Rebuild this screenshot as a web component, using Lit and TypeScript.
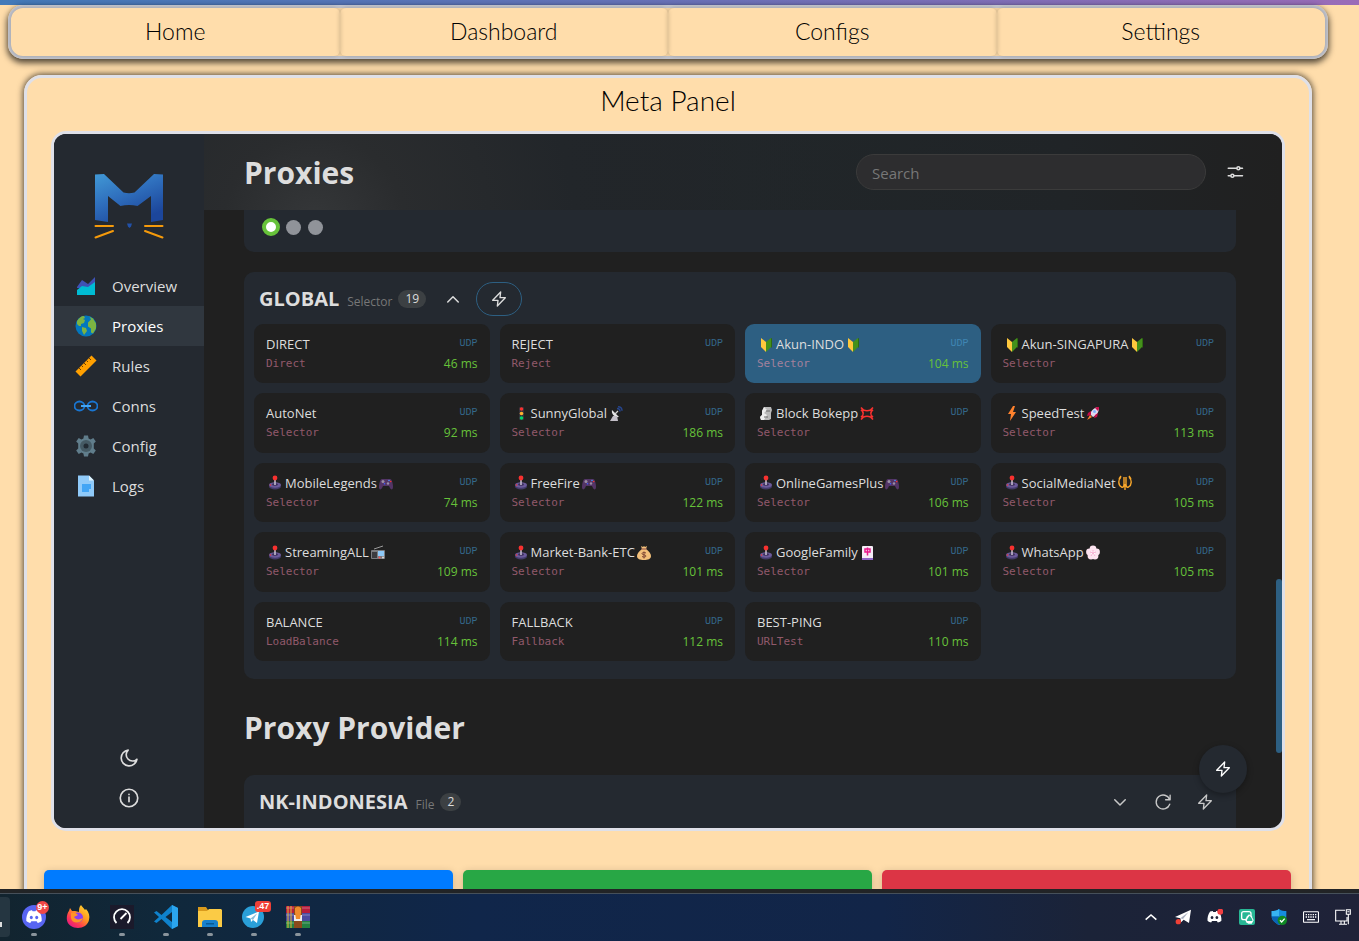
import { LitElement, html, svg, css, nothing, TemplateResult } from "lit";
import { customElement } from "lit/decorators.js";
import { classMap } from "lit/directives/class-map.js";

const glyphs: Record<string, TemplateResult> = {
  beginner: svg`<path d="M2 1l5 4v10l-5-5z" fill="#ffc83d"/><path d="M12 1L7 5v10l5-5z" fill="#44911b"/><path d="M12 1l1 .5V10l-1 1z" fill="#2f6b12"/>`,
  traffic: svg`<rect x="5" y="1" width="5" height="13" rx="1" fill="#33303a"/><circle cx="7.5" cy="3" r="1.8" fill="#f8312f"/><circle cx="7.5" cy="7.5" r="1.8" fill="#ffb02e"/><circle cx="7.5" cy="12" r="1.8" fill="#00d26a"/>`,
  satellite: svg`<path d="M3 4c-1 4 3 8 7 7z" fill="#e6e6e6"/><path d="M4 10l-3 5h8l-1-5z" fill="#c4c0c8"/><path d="M6 8l3-3" stroke="#d3d3d3" stroke-width="1.2"/><path d="M8 2.500c2 0 3 1 3 3M9 .8c3 0 4 2 4 4" stroke="#26458c" stroke-width="1.500" fill="none"/>`,
  moai: svg`<path d="M5 1h7l1 3-1 3v6l-2 1H2l-1-3 2-2V5z" fill="#b9b9b9"/><path d="M5 1L3 5v4l-2 2 1 3h3l3-5-3-2 3-3z" fill="#ececec"/><path d="M7 5h4M5 11h4" stroke="#6d6d6d" stroke-width="1.2"/>`,
  anger: svg`<path d="M1 1.500l2.500 2.500q3.500 1.500 7 0L13 1.500M1 13.500l2.500-2.500q3.500-1.500 7 0l2.500 2.500M1 4l1.500 1q1.500 2.500 0 5L1 11M13 4l-1.500 1q-1.500 2.500 0 5l1.500 1" stroke="#f8312f" stroke-width="1.7" fill="none"/>`,
  bolt: svg`<path d="M8 0L3 8h3l-1 7 6-9H8l2-6z" fill="#ff822d"/>`,
  rocket: svg`<path d="M13 1c-5 0-8 4-9 7l3 3c4-2 6-5 6-10z" fill="#e1d8ec"/><path d="M13 1c-2 0-3 .3-4 1l3 3c.8-1 1-2 1-4zM5 5L2 7l-1 3 4-1zM9 9l-1 3 3-1 1-4z" fill="#ca0b4a"/><circle cx="8.5" cy="5.5" r="1.5" fill="#7fb4ff"/><path d="M4 9l-3 5 5-3z" fill="#ff822d"/>`,
  joystick: svg`<ellipse cx="7" cy="11.5" rx="6" ry="3" fill="#433b6b"/><ellipse cx="7" cy="10" rx="6" ry="2.7" fill="#6b5a9b"/><ellipse cx="7" cy="9.5" rx="3" ry="1.3" fill="#3b2f5a"/><path d="M7 4v6" stroke="#cdc4d6" stroke-width="1.5"/><circle cx="7" cy="3" r="2.4" fill="#f8312f"/><circle cx="2.5" cy="10" r=".8" fill="#f8312f"/>`,
  gamepad: svg`<path d="M3 4h8c2 0 3 5 3 8 0 3-2 3-3 1l-1-2H4l-1 2c-1 2-3 2-3-1 0-3 1-8 3-8z" fill="#533566"/><circle cx="4" cy="6.500" r="1.500" fill="#998ea4"/><circle cx="9" cy="8.500" r="1.200" fill="#998ea4"/><circle cx="10" cy="5.500" r=".8" fill="#5092ff"/><circle cx="11.700" cy="6.500" r=".8" fill="#f8312f"/><circle cx="5.500" cy="8.700" r=".8" fill="#3f5fff"/>`,
  trident: svg`<path d="M3 2C0 5 0 10 3.500 12c2 .8 2.500-1 2.500-3V2M11 2c3 3 3 8-.5 10-2 .8-2.500-1-2.500-3V2M7 9v6M1 4l2-3M13 4l-2-3" stroke="#f9a72b" stroke-width="1.400" fill="none"/>`,
  radio: svg`<rect y="5" width="14" height="9" rx="1" fill="#7c7c80"/><rect x="1" y="7" width="5" height="6" fill="#3c3b3f"/><rect x="7" y="6" width="6" height="5" fill="#8ec9f8"/><path d="M3 4l9-3" stroke="#9b9b9b"/><circle cx="8.500" cy="12.500" r="1" fill="#f55"/><circle cx="12" cy="12.500" r="1" fill="#ddd"/>`,
  money: svg`<path d="M4 1l2 1 1-1 1 1 2-1-1 3c3 2 5 5 5 7 0 3-3 4-7 4s-7-1-7-4c0-2 2-5 5-7z" fill="#f3c07a"/><path d="M4.500 4h5" stroke="#a56953" stroke-width="1.4"/><path d="M9 8c-2-1-4-.5-4 .7 0 1.500 4 .8 4 2.300 0 1.200-2.500 1.400-4 .5M7 6.500v7" stroke="#7d4533" fill="none"/>`,
  mahjong: svg`<rect x="2" y="1" width="11" height="14" rx="1" fill="#f5edf7"/><rect x="2" y="13" width="11" height="2" fill="#8d65c5"/><path d="M5 4h5v3H5zM7.500 2.500v8" stroke="#e8198b" stroke-width="1.500" fill="none"/>`,
  flower: svg`<g fill="#fde3f0"><circle cx="7" cy="4" r="3.400"/><circle cx="3.500" cy="7" r="3.400"/><circle cx="10.500" cy="7" r="3.400"/><circle cx="5" cy="11" r="3.400"/><circle cx="9" cy="11" r="3.400"/></g><circle cx="7" cy="8" r="2" fill="#fff"/><path d="M7 8V5M7 8l3-1M7 8L4 7M7 8l-2 3M7 8l2 3" stroke="#f59ac6" stroke-width=".7"/>`,
};

const line = (size: number, body: TemplateResult, width = 2) =>
  html`<svg width=${size} height=${size} viewBox="0 0 24 24" fill="none" stroke="currentColor" stroke-width=${width} stroke-linecap="round" stroke-linejoin="round" aria-hidden="true">${body}</svg>`;

const zap = () => line(16, svg`<path d="M14.500 1.500L2.500 14h8l-1 8.500L21.500 10h-8z"/>`, 2);
const chevronUp = () => line(18, svg`<path d="M5 16l7-7 7 7"/>`, 2);
const chevronDown = () => line(18, svg`<path d="M5 9l7 7 7-7"/>`, 2);

interface Proxy {
  name: string;
  type: string;
  delay?: number;
  before?: string;
  after?: string;
  active?: boolean;
}

const proxies: Proxy[] = [
  { name: "DIRECT", type: "Direct", delay: 46 },
  { name: "REJECT", type: "Reject" },
  { name: "Akun-INDO", type: "Selector", delay: 104, before: "beginner", after: "beginner", active: true },
  { name: "Akun-SINGAPURA", type: "Selector", before: "beginner", after: "beginner" },
  { name: "AutoNet", type: "Selector", delay: 92 },
  { name: "SunnyGlobal", type: "Selector", delay: 186, before: "traffic", after: "satellite" },
  { name: "Block Bokepp", type: "Selector", before: "moai", after: "anger" },
  { name: "SpeedTest", type: "Selector", delay: 113, before: "bolt", after: "rocket" },
  { name: "MobileLegends", type: "Selector", delay: 74, before: "joystick", after: "gamepad" },
  { name: "FreeFire", type: "Selector", delay: 122, before: "joystick", after: "gamepad" },
  { name: "OnlineGamesPlus", type: "Selector", delay: 106, before: "joystick", after: "gamepad" },
  { name: "SocialMediaNet", type: "Selector", delay: 105, before: "joystick", after: "trident" },
  { name: "StreamingALL", type: "Selector", delay: 109, before: "joystick", after: "radio" },
  { name: "Market-Bank-ETC", type: "Selector", delay: 101, before: "joystick", after: "money" },
  { name: "GoogleFamily", type: "Selector", delay: 101, before: "joystick", after: "mahjong" },
  { name: "WhatsApp", type: "Selector", delay: 105, before: "joystick", after: "flower" },
  { name: "BALANCE", type: "LoadBalance", delay: 114 },
  { name: "FALLBACK", type: "Fallback", delay: 112 },
  { name: "BEST-PING", type: "URLTest", delay: 110 },
];

const menu: { label: string; icon: TemplateResult }[] = [
  { label: "Overview", icon: svg`<path d="M3 13l5-7 6 4 7-7v11H3z" fill="#3f51b5"/><path d="M3 16l5-4 6 1 7-5v13H3z" fill="#00bcd4"/>` },
  { label: "Proxies", icon: svg`<circle cx="12" cy="12" r="10.500" fill="#0277bd"/><path d="M3 7c2-3 4-5 7-5l1 2-2 1 2 1-1 3-3 1 0 2-2 0-2-2zM8 13l4 1 1 3-3 4-2-4zM15 2.500l4 2 3 5 0 5-3 5-2-1 0-4-3-2 0-4 3-3-1-2z" fill="#7cb342"/>` },
  { label: "Rules", icon: svg`<path d="M17.500 1.500l5 5-16 16-5-5z" fill="#ffa000"/><path d="M15 4l2 2M12.500 6.500l1.500 1.500M10 9l2 2M7.500 11.500L9 13M5 14l2 2" stroke="#6d4000" stroke-width="1"/>` },
  { label: "Conns", icon: svg`<ellipse cx="5.500" cy="12" rx="5" ry="4.500" fill="none" stroke="#1976d2" stroke-width="1.800"/><ellipse cx="18.500" cy="12" rx="5" ry="4.500" fill="none" stroke="#1976d2" stroke-width="1.800"/><path d="M7 12h10" stroke="#42a5f5" stroke-width="2"/>` },
  { label: "Config", icon: svg`<path d="M10 1.500h4l.6 3 2 .9 2.700-1.400 2.500 3.400-2 2v5.200l2 2-2.500 3.400-2.700-1.400-2 .9-.6 3h-4l-.6-3-2-.9-2.700 1.400-2.500-3.400 2-2V9.400l-2-2L4.700 4l2.700 1.400 2-.9z" fill="#607d8b"/><circle cx="12" cy="12" r="6" fill="#455a64"/><circle cx="12" cy="12" r="2.500" fill="#222b33"/>` },
  { label: "Logs", icon: svg`<path d="M4 1.500h11l5 5v16H4z" fill="#90caf9"/><path d="M15 1.500l5 5h-5z" fill="#e1f5fe"/><path d="M8 10h9v5h-2v3H8z" fill="#42a5f5"/>` },
];

const art = (body: TemplateResult, size = 24) =>
  html`<svg width=${size} height=${size} viewBox="0 0 24 24" aria-hidden="true">${body}</svg>`;

const discord = (fill: string, eye: string) => svg`<path d="M7 6c1.500-.7 2-.7 3-.8l.6 1h2.800l.6-1c1 .1 1.500.1 3 .8 2 3 3 6.500 2.700 10-1.400 1.200-2.700 1.700-4 2l-1-1.700H9.300l-1 1.700c-1.300-.3-2.600-.8-4-2C4 12.500 5 9 7 6z" fill=${fill}/><ellipse cx="9.300" cy="12.500" rx="1.500" ry="1.700" fill=${eye}/><ellipse cx="14.700" cy="12.500" rx="1.500" ry="1.700" fill=${eye}/>`;

const apps: { label: string; icon: TemplateResult; idle?: boolean; badge?: string }[] = [
  { label: "Discord", badge: "9+", icon: svg`<circle cx="12" cy="12" r="12" fill="#5865f2"/>${discord("#fff", "#5865f2")}` },
  { label: "Firefox", idle: true, icon: svg`<defs><linearGradient id="ff" x1="1" y1="0" x2=".2" y2="1"><stop stop-color="#ffe636"/><stop offset=".45" stop-color="#ff9a1f"/><stop offset=".75" stop-color="#ff3b50"/><stop offset="1" stop-color="#e31587"/></linearGradient></defs><path d="M15 0c1 2 3 3 4 5l1-1c3 3 4 7 3 11-1 5-6 8-11 8S1 20 .8 14C.6 10 2 7 3 6l1-3 2 3 3 0 4 1c0-3 0-5 2-7z" fill="url(#ff)"/><circle cx="12" cy="12.500" r="5" fill="#8a3ff0"/><path d="M5 8c3-1 5 0 7 2l-4 2c2 3 5 3 9 1-2 6-11 6-12 0z" fill="#ff9426"/>` },
  { label: "Speedtest", icon: svg`<rect width="24" height="24" fill="#1b1a2b"/><path d="M6.500 18a8 8 0 1 1 11 0" fill="none" stroke="#fff" stroke-width="1.800"/><path d="M10.500 14l6-6" stroke="#fff" stroke-width="1.800"/>` },
  { label: "Visual Studio Code", icon: svg`<path d="M18 0l6 3v18l-6 3L7.500 14 2.500 18 0 16.500 5 12 0 7.500 2.500 6 7.500 10zM18 7l-6.500 5 6.500 5z" fill="#0f82cc" fill-rule="evenodd"/><path d="M18 0l6 3v18l-6 3z" fill="#2ba5ee"/>` },
  { label: "File Explorer", icon: svg`<path d="M0 2h8l2 3v5H0z" fill="#d99a1c"/><path d="M0 6h9l2-2h12l1 1v17H0z" fill="#fbcb45"/><path d="M4 22v-4q0-3 3-3h10q3 0 3 3v4z" fill="#1780cc"/><path d="M8 18h8v1.500H8z" fill="#075a96"/>` },
  { label: "Telegram", badge: ".47", icon: svg`<circle cx="11" cy="12" r="11" fill="#2a9fd8"/><path d="M3.500 12L17 6.500 15 18l-4-3-2 2-.4-3.500z" fill="#fff"/><path d="M8.600 13.500L15 8.500 11 15z" fill="#8abedb"/>` },
  { label: "WinRAR", icon: svg`<rect y="1" width="24" height="7" fill="#b51d3d"/><rect y="8" width="24" height="8" fill="#4b4aa0"/><rect y="16" width="24" height="7" fill="#238142"/><path d="M0 3h24M0 10h24M0 18h24" stroke="#ffffff55"/><path d="M2 1v22M5 1v22" stroke="#e3b83d"/><rect x="8" y="1" width="8" height="22" fill="#8a4a1c"/><path d="M8 10h2v4h4v-4h2v6H8z" fill="#ececec"/><path d="M9 3q3-3 6 0v5l-1 6h-4L9 8z" fill="#f08c2b"/>` },
];

const tray: { label: string; icon: TemplateResult }[] = [
  { label: "Show hidden icons", icon: svg`<path d="M4 16l8-7 8 7" fill="none" stroke="#fff" stroke-width="2.400"/>` },
  { label: "Telegram", icon: svg`<path d="M0 12L24 1l-3 20-8-5-4 4-1-6z" fill="#fff"/><path d="M8 14L20 5l-8 10z" fill="#aab0c0"/><circle cx="5" cy="19" r="4" fill="#ef4036"/>` },
  { label: "Discord", icon: svg`<g transform="translate(-5 -4) scale(1.350)">${discord("#fff", "#1f2439")}</g><circle cx="20" cy="4" r="4.500" fill="#f23f42"/>` },
  { label: "Screen sharing", icon: svg`<rect width="24" height="24" rx="3" fill="#28b795"/><rect x="4" y="4" width="14" height="12" rx="3" fill="none" stroke="#fff" stroke-width="2"/><path d="M11 20l-2-4 3-5 3-3 4 3 3 6-3 5h-5z" fill="#fff"/><path d="M16 10q5 6 4 8h-8q-1-2 4-8z" fill="#28b795"/>` },
  { label: "Windows Security", icon: svg`<path d="M12 0c4 3 7 3 11 3v8c0 6-5 10-11 13C6 21 1 17 1 11V3c4 0 7 0 11-3z" fill="#168dde"/><path d="M1 11h11v13C6 21 1 17 1 11z" fill="#0a64b4"/><path d="M1 3c4 0 7 0 11-3v11H1z" fill="#37b4f2"/><circle cx="17" cy="17" r="7" fill="#108a24"/><path d="M13.500 17l2.500 2.500 4.500-5" stroke="#fff" stroke-width="2" fill="none"/>` },
  { label: "Touch keyboard", icon: svg`<rect x=".8" y="4" width="22.400" height="16" rx="1" fill="none" stroke="#fff" stroke-width="1.600"/><path d="M4 8.500h16M4 12h16" stroke="#fff" stroke-width="2" stroke-dasharray="2 1.500"/><path d="M6 16h12" stroke="#fff" stroke-width="1.800"/>` },
  { label: "Network", icon: svg`<path d="M15 2H1v16h17V12M6 23h12M9 18v5M14 18v5M17 1h6v7h-6zM20 8v15M18.500 4h3" fill="none" stroke="#fff" stroke-width="1.600"/>` },
];

@customElement("proxy-card")
class ProxyCard extends LitElement {
  static properties = { proxy: { attribute: false } };
  declare proxy: Proxy;

  static styles = css`
    :host { display: grid; }
    .card {
      display: flex; flex-direction: column;
      padding: 10px 12px 8px;
      border: 0; border-radius: 9px;
      background: #202020; color: #dddddd;
      font: inherit; text-align: left;
    }
    .active { background: #2d5f82; }
    .row { display: flex; align-items: center; justify-content: space-between; height: 20px; width: 100%; }
    .name { display: flex; align-items: center; font-size: 13px; line-height: 20px; white-space: nowrap; }
    .before { margin: 0 3px 0 2px; }
    .after { margin-left: 2px; }
    .udp { font: 10px/20px "Liberation Mono", monospace; color: #34678a; }
    .type { font: 11px/20px "DejaVu Sans Mono", monospace; color: #91596b; }
    .active .udp { color: #3f86b4; }
    .active .type { color: #a3819d; }
    .delay { font-size: 12px; line-height: 20px; color: #67c23a; }
  `;

  glyph(id: string | undefined, place: string) {
    return id
      ? html`<svg class=${place} width="14" height="15" viewBox="0 0 14 15" aria-hidden="true">${glyphs[id]}</svg>`
      : nothing;
  }

  render() {
    const p = this.proxy;
    return html`
      <button class=${classMap({ card: true, active: !!p.active })}>
        <span class="row">
          <span class="name">${this.glyph(p.before, "before")}${p.name}${this.glyph(p.after, "after")}</span>
          <span class="udp">UDP</span>
        </span>
        <span class="row">
          <span class="type">${p.type}</span>
          ${p.delay ? html`<span class="delay">${p.delay} ms</span>` : nothing}
        </span>
      </button>
    `;
  }
}

@customElement("meta-panel")
class MetaPanel extends LitElement {
  static styles = css`
    :host {
      display: grid; grid-template-columns: 150px 1fr;
      position: relative; box-sizing: border-box; height: 700px; overflow: hidden;
      border: 3px solid #dfe0e8; border-radius: 15px;
      background: #202020; color: #dddddd;
      font-family: "Open Sans", "Noto Sans", sans-serif; font-weight: 400;
    }
    button { border: 0; padding: 0; background: none; color: inherit; font: inherit; display: flex; align-items: center; justify-content: center; }
    h1, h2 { margin: 0; font-weight: 700; }
    .side { display: flex; flex-direction: column; background: #242930; }
    .logo { display: flex; justify-content: center; padding: 38px 0 26px; }
    .menu { display: flex; flex-direction: column; }
    .item { display: flex; align-items: center; gap: 14px; height: 40px; padding-left: 20px; color: #dddddd; font-size: 15px; text-decoration: none; }
    .current { background: #30373f; color: #ffffff; }
    .foot { display: flex; flex-direction: column; align-items: center; gap: 20px; margin-top: auto; padding-bottom: 20px; }
    .main { min-width: 0; min-height: 0; overflow: hidden; }
    .head {
      display: flex; align-items: center; box-sizing: border-box; height: 76px; padding: 0 38px 0 40px;
      background: radial-gradient(circle at 110px 90px, #353739 0, #2a2c2e 90px, #22262a 260px, #20252800 520px), linear-gradient(90deg, #202122, #212629 50%, #202427 80%, #202020);
    }
    .title { padding-top: 2px; font-size: 30px; line-height: 42px; }
    .search {
      width: 350px; height: 36px; box-sizing: border-box; margin: 0 20px 0 auto; padding: 2px 15px 0;
      border: 1px solid #3b3b3b; border-radius: 18px; background: #2d2d2f; color: #dddddd;
      font: 15px "Open Sans", sans-serif; outline: 0;
    }
    .search::placeholder { color: #777777; opacity: 1; }
    .body { padding: 0 46px 0 40px; }
    .group { background: #242930; border-radius: 10px; }
    .tail { display: flex; align-items: center; gap: 7px; padding: 8px 18px 16px; border-radius: 0 0 10px 10px; margin-bottom: 20px; }
    .dot { width: 15px; height: 15px; border-radius: 50%; background: #909399; }
    .on { box-sizing: border-box; width: 18px; height: 18px; margin-right: -1px; border: 4px solid #67c23a; background: #ffffff; }
    .bar { display: flex; align-items: center; height: 34px; padding: 10px 23px 8px 15px; }
    .label { display: flex; align-items: baseline; gap: 8px; }
    .name { font-size: 20px; line-height: 28px; }
    .kind { font-size: 12px; color: #777777; }
    .count { margin-left: 6px; padding: 0 7px; border-radius: 9px; background: #3c4043; font-size: 12px; line-height: 18px; }
    .fold { margin: 0 14px 0 18px; }
    .test { width: 46px; height: 34px; border: 1px solid #2d5f82; border-radius: 17px; }
    .grid { display: grid; grid-template-columns: repeat(4, 1fr); grid-auto-rows: 1fr; gap: 10px; min-height: 337px; padding: 0 10px 18px; }
    .section { padding: 28px 0 26px; font-size: 30px; line-height: 42px; }
    .provider { padding-bottom: 20px; }
    .tools { display: flex; align-items: center; gap: 25px; margin-left: auto; color: #c8c8c8; }
    .thumb { position: absolute; right: 0; top: 445px; width: 6px; height: 174px; border-radius: 3px; background: #2d5f82; }
    .fab { position: absolute; right: 35px; bottom: 35px; width: 48px; height: 48px; border-radius: 50%; background: #242930; color: #ffffff; box-shadow: 0 2px 6px #00000055; }
  `;

  render() {
    return html`
      <aside class="side">
        <div class="logo">
          <svg width="70" height="68" viewBox="0 0 70 68" role="img" aria-label="Meta">
            <defs><linearGradient id="m" x1="0" y1="0" x2=".6" y2="1"><stop stop-color="#4199d6"/><stop offset=".5" stop-color="#2f6fbd"/><stop offset="1" stop-color="#1c469b"/></linearGradient></defs>
            <path d="M1 2.500L10 2l19.500 18.500q5.500 1.500 11 0L60 2l9 .5V48l-12 2V24l-13.500 10q-8.500-2-17 0L14 24v26L1 48z" fill="url(#m)"/>
            <path d="M33 51.500h5l-1 3-1.500 1.500-1.500-1.500z" fill="#2251a8"/>
            <path d="M1.500 54H19M51 54h17.500M1.500 65.500L19 59M51 59l17.500 6.500" stroke="#f59a0b" stroke-width="2" stroke-linecap="round"/>
          </svg>
        </div>
        <nav class="menu">
          ${menu.map((m) => html`<a class=${classMap({ item: true, current: m.label === "Proxies" })} href="#${m.label.toLowerCase()}">${art(m.icon)}<span>${m.label}</span></a>`)}
        </nav>
        <div class="foot">
          <button aria-label="Dark theme">${line(20, svg`<path d="M21.500 13.500A9.500 9.500 0 1 1 11 2.500a7.300 7.300 0 0 0 10.500 11z"/>`)}</button>
          <button aria-label="About">${line(20, svg`<circle cx="12" cy="12" r="10.500"/><path d="M12 11v5.500M12 7.500v.2"/>`)}</button>
        </div>
      </aside>
      <main class="main">
        <header class="head">
          <h1 class="title">Proxies</h1>
          <input class="search" type="text" placeholder="Search" aria-label="Search" />
          <button aria-label="Filters">${line(18, svg`<path d="M3 7h11M19 7h3M3 17h3M11 17h11"/><circle cx="16.500" cy="7" r="2"/><circle cx="8.500" cy="17" r="2"/>`, 2)}</button>
        </header>
        <div class="body">
          <section class="group tail"><span class="dot on"></span><span class="dot"></span><span class="dot"></span></section>
          <section class="group">
            <div class="bar">
              <div class="label"><h2 class="name">GLOBAL</h2><span class="kind">Selector</span></div>
              <span class="count">19</span>
              <button class="fold" aria-label="Collapse">${chevronUp()}</button>
              <button class="test" aria-label="Test latency">${zap()}</button>
            </div>
            <div class="grid">${proxies.map((p) => html`<proxy-card .proxy=${p}></proxy-card>`)}</div>
          </section>
          <h1 class="section">Proxy Provider</h1>
          <section class="group provider">
            <div class="bar">
              <div class="label"><h2 class="name">NK-INDONESIA</h2><span class="kind">File</span></div>
              <span class="count">2</span>
              <div class="tools">
                <button aria-label="Expand">${chevronDown()}</button>
                <button aria-label="Refresh">${line(18, svg`<path d="M21.500 3v6h-6M20.800 8.500A9.300 9.300 0 1 0 21 15"/>`, 1.8)}</button>
                <button aria-label="Health check">${zap()}</button>
              </div>
            </div>
          </section>
        </div>
      </main>
      <div class="thumb"></div>
      <button class="fab" aria-label="Test all">${zap()}</button>
    `;
  }
}

@customElement("task-bar")
class TaskBar extends LitElement {
  static styles = css`
    :host {
      display: flex; justify-content: space-between; box-sizing: border-box; height: 52px;
      border-top: 4px solid #222426; box-shadow: inset 0 1px #46505a;
      background: linear-gradient(90deg, #12242f, #10283b 12%, #10264a 35%, #122548 65%, #1b2338 80%, #1f2238);
      font-family: "Open Sans", sans-serif; font-weight: 400;
    }
    button { border: 0; padding: 0; background: none; display: flex; }
    .apps { display: flex; align-items: stretch; }
    .edge { display: flex; align-items: center; width: 10px; height: 40px; margin: 4px 2px 0 0; border-radius: 0 4px 4px 0; background: #253641; }
    .edge::before { content: ""; width: 2px; height: 5px; margin-top: 14px; background: #dddddd; }
    .app { position: relative; width: 44px; flex-direction: column; align-items: center; padding-top: 12px; gap: 4px; }
    .mark { width: 6px; height: 3px; border-radius: 2px; background: #8a949c; }
    .badge { position: absolute; top: 8px; left: 24px; min-width: 13px; height: 13px; border-radius: 7px; background: #f04747; color: #ffffff; font-size: 9px; font-weight: 600; line-height: 13px; text-align: center; }
    .wide { left: 23px; min-width: 16px; height: 11px; border-radius: 3px; background: #ef4036; line-height: 11px; }
    .tray { display: flex; align-items: center; }
    .slot { width: 32px; justify-content: center; align-items: center; }
  `;

  render() {
    return html`
      <div class="apps">
        <span class="edge"></span>
        ${apps.map((a) => html`<button class="app" aria-label=${a.label}>${art(a.icon)}${a.idle ? nothing : html`<span class="mark"></span>`}${a.badge ? html`<span class=${classMap({ badge: true, wide: a.badge.length > 2 })}>${a.badge}</span>` : nothing}</button>`)}
      </div>
      <div class="tray">${tray.map((t) => html`<button class="slot" aria-label=${t.label}>${art(t.icon, 16)}</button>`)}</div>
    `;
  }
}

@customElement("app-root")
class AppRoot extends LitElement {
  static styles = css`
    :host { display: flex; flex-direction: column; height: 100vh; overflow: hidden; background: #ffddab; color: #000000; font-family: "Century Gothic", Lato, sans-serif; font-weight: 300; }
    .page { flex: 1; min-height: 0; overflow: hidden; }
    .strip { height: 5px; background: linear-gradient(90deg, #437ab9, #6573b9 45%, #9a6cb8); }
    .wrap { padding: 0 31px 0 8px; }
    .nav { display: flex; border: 3px solid #c3c5ce; border-radius: 15px; box-shadow: 0 3px 6px 1px #000000aa; }
    .tab { flex: 1; border-radius: 6px; padding: 9px 0 11px; color: inherit; font-size: 23px; line-height: 28px; text-align: center; text-decoration: none; box-shadow: 0 0 5px #00000038; }
    .nav .tab:first-child { border-radius: 12px 6px 6px 12px; }
    .nav .tab:last-child { border-radius: 6px 12px 12px 6px; }
    .card { margin: 16px 16px 0; padding: 7px 24px 60px; border: 3px solid #dfe0e8; border-radius: 18px; box-shadow: 0 0 6px 1px #000000aa; }
    .heading { margin: 0 0 15px; font-size: 28px; line-height: 31px; font-weight: 300; text-align: center; }
    .actions { display: grid; grid-template-columns: repeat(3, 1fr); gap: 10px; margin: 39px -6px 0 -7px; }
    .action { height: 48px; border: 0; border-radius: 5px; box-shadow: 0 2px 8px #00000033; }
    .blue { background: #007bff; }
    .green { background: #28a745; }
    .red { background: #dc3545; }
  `;

  render() {
    return html`
      <div class="page">
        <div class="strip"></div>
        <div class="wrap">
          <nav class="nav">
            ${["Home", "Dashboard", "Configs", "Settings"].map((t) => html`<a class="tab" href="#${t.toLowerCase()}">${t}</a>`)}
          </nav>
          <section class="card">
            <h1 class="heading">Meta Panel</h1>
            <meta-panel></meta-panel>
            <div class="actions">
              <button class="action blue" aria-label="Start"></button>
              <button class="action green" aria-label="Restart"></button>
              <button class="action red" aria-label="Stop"></button>
            </div>
          </section>
        </div>
      </div>
      <task-bar></task-bar>
    `;
  }
}
